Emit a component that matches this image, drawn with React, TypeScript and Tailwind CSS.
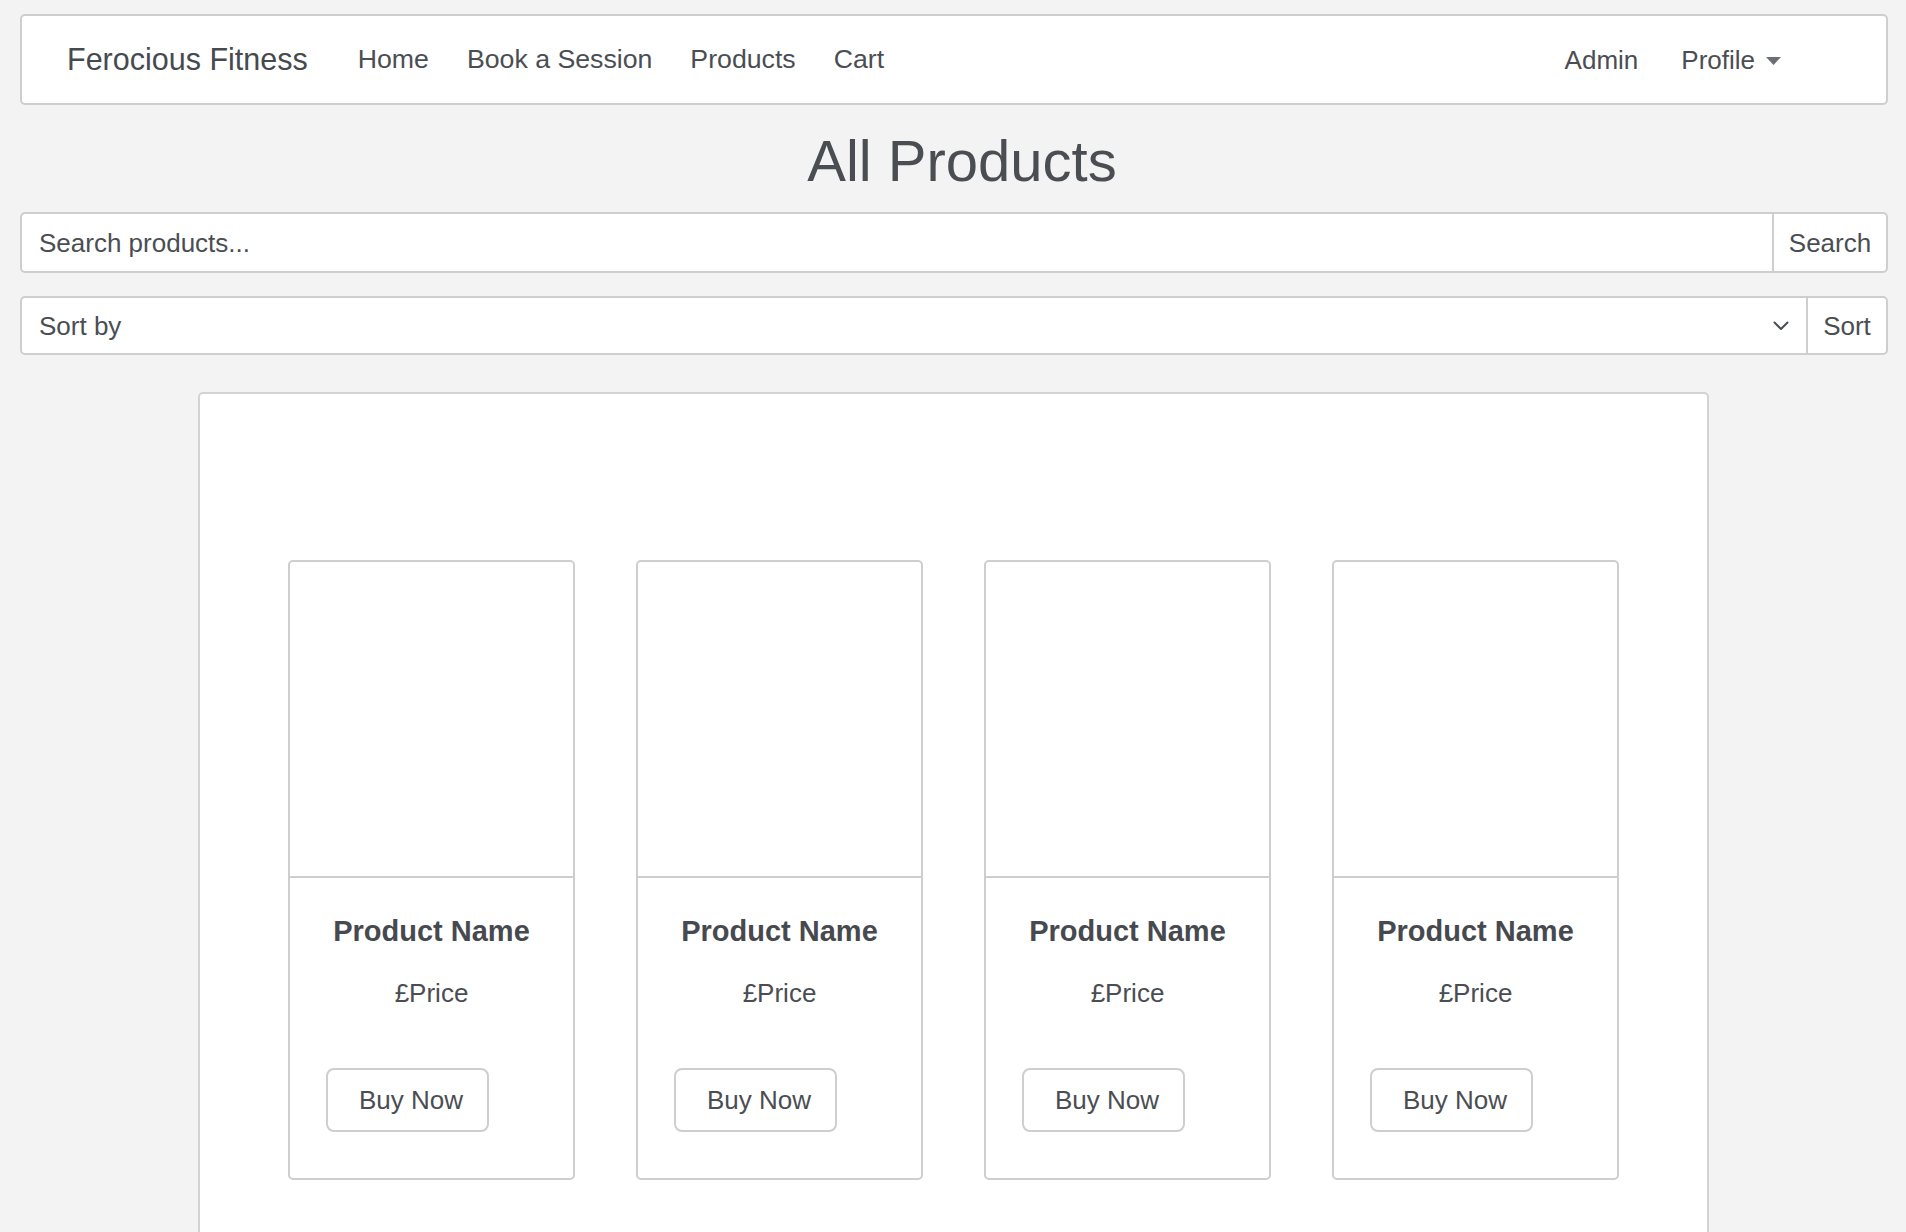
import React from "react";

const font = { fontFamily: '"Liberation Sans", Arial, Helvetica, sans-serif' };

function Caret() {
  return (
    <svg width="15" height="8" viewBox="0 0 15 8" className="ml-[11px] mt-[2px]" aria-hidden>
      <path d="M0 0 H15 L7.5 8 Z" fill="#6b6f74" />
    </svg>
  );
}

function Chevron() {
  return (
    <svg width="16" height="10" viewBox="0 0 16 10" aria-hidden>
      <path d="M1.5 1.5 L8 8 L14.5 1.5" fill="none" stroke="#4a4e53" strokeWidth="2" strokeLinecap="round" strokeLinejoin="round" />
    </svg>
  );
}

function Navbar() {
  const links = ["Home", "Book a Session", "Products", "Cart"];
  return (
    <nav className="flex h-[91px] items-center rounded-[5px] border-2 border-[#cdcecf] bg-white pl-[45px] pr-[105px] text-[#4a4e53]">
      <a className="text-[30.5px] leading-none text-[#464a4f]">Ferocious Fitness</a>
      <ul className="ml-[50px] flex items-center gap-[38px] text-[26.7px] leading-none">
        {links.map((l) => (
          <li key={l}>{l}</li>
        ))}
      </ul>
      <div className="ml-auto flex items-center text-[26px] leading-none">
        <span>Admin</span>
        <span className="ml-[43px] flex items-center">
          Profile
          <Caret />
        </span>
      </div>
    </nav>
  );
}

function ProductCard() {
  return (
    <div className="flex w-[287px] flex-col rounded-[5px] border-2 border-[#cdcecf] bg-white">
      <div className="h-[316px] border-b-2 border-[#cdcecf]" />
      <div className="flex flex-col pt-[36px] pb-[46px]">
        <h5 className="text-center text-[29px] font-bold leading-[34px] text-[#464a4f]">Product Name</h5>
        <p className="mt-[30px] text-center text-[26px] leading-[30px]">£Price</p>
        <button className="ml-[36px] mt-[60px] flex h-[64px] w-[163px] items-center rounded-[8px] border-2 border-[#cdcecf] bg-white pl-[31px] text-[26px] leading-none text-[#4a4e53]">
          Buy Now
        </button>
      </div>
    </div>
  );
}

export default function App() {
  return (
    <div style={font} className="min-h-screen bg-[#f3f3f3] pl-[20px] pr-[18px] pt-[14px] pb-[40px] text-[#4a4e53]">
      <Navbar />

      <h1 className="mt-[22px] pl-[16px] text-center text-[58px] leading-[68px] text-[#4a4e53]">All Products</h1>

      <div className="mt-[17px] flex h-[61px] rounded-[5px] border-2 border-[#cdcecf] bg-white">
        <div className="flex flex-1 items-center pl-[17px] text-[26px] leading-none">Search products...</div>
        <button className="flex w-[114px] items-center justify-center border-l-2 border-[#cdcecf] text-[26px] leading-none text-[#4a4e53]">
          Search
        </button>
      </div>

      <div className="mt-[23px] flex h-[59px] rounded-[5px] border-2 border-[#cdcecf] bg-white">
        <div className="flex flex-1 items-center justify-between pl-[17px] pr-[17px] text-[26px] leading-none">
          <span>Sort by</span>
          <Chevron />
        </div>
        <button className="flex w-[80px] items-center justify-center border-l-2 border-[#cdcecf] text-[26px] leading-none text-[#4a4e53]">
          Sort
        </button>
      </div>

      <div className="ml-[178px] mr-[179px] mt-[37px] rounded-[5px] border-2 border-[#d2d3d4] bg-white pt-[166px] pb-[120px]">
        <div className="flex justify-center gap-[61px]">
          <ProductCard />
          <ProductCard />
          <ProductCard />
          <ProductCard />
        </div>
      </div>
    </div>
  );
}
